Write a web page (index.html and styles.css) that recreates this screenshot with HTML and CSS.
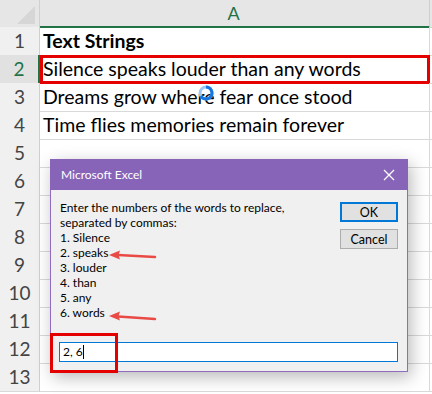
FILE: index.html
```html
<!DOCTYPE html>
<html lang="en">
<head>
  <meta charset="UTF-8" />
  <title>Replace words - Excel</title>
  <link rel="stylesheet" href="styles.css">
</head>
<body>

  <div class="sheet">
    <div class="row head">
      <div class="corner"><span class="tri"></span></div>
      <div class="colhead">A</div>
      <div class="rest"></div>
    </div>
    <div class="row">
      <div class="num">1</div>
      <div class="cell bold">Text Strings</div>
      <div class="rest"></div>
    </div>
    <div class="row">
      <div class="num sel">2</div>
      <div class="cell marked">Silence speaks louder than any words</div>
      <div class="rest"></div>
    </div>
    <div class="row">
      <div class="num">3</div>
      <div class="cell">Dreams grow where fear once stood</div>
      <div class="rest"></div>
    </div>
    <div class="row">
      <div class="num">4</div>
      <div class="cell">Time flies memories remain forever</div>
      <div class="rest"></div>
    </div>
    <div class="row"><div class="num">5</div><div class="cell"></div><div class="rest"></div></div>
    <div class="row"><div class="num">6</div><div class="cell"></div><div class="rest"></div></div>
    <div class="row"><div class="num">7</div><div class="cell"></div><div class="rest"></div></div>
    <div class="row"><div class="num">8</div><div class="cell"></div><div class="rest"></div></div>
    <div class="row"><div class="num">9</div><div class="cell"></div><div class="rest"></div></div>
    <div class="row"><div class="num">10</div><div class="cell"></div><div class="rest"></div></div>
    <div class="row"><div class="num">11</div><div class="cell"></div><div class="rest"></div></div>
    <div class="row"><div class="num">12</div><div class="cell"></div><div class="rest"></div></div>
    <div class="row"><div class="num">13</div><div class="cell"></div><div class="rest"></div></div>
  </div>

  <!-- busy cursor -->
  <svg class="busy" width="18" height="18" viewBox="0 0 18 18">
    <circle cx="9" cy="9" r="6" fill="none" stroke="#9cc8f2" stroke-width="3"/>
    <path d="M9 3 A6 6 0 1 1 3.8 12" fill="none" stroke="#1677e0" stroke-width="3"/>
  </svg>

  <div class="dialog">
    <div class="titlebar">
      <span>Microsoft Excel</span>
      <svg class="close" width="12" height="12" viewBox="0 0 12 12">
        <path d="M1 1 L11 11 M11 1 L1 11" stroke="#fff" stroke-width="1.3"/>
      </svg>
    </div>
    <div class="dbody">
      <div class="top">
        <div class="msg">
          Enter the numbers of the words to replace,<br>
          separated by commas:<br>
          1. Silence<br>
          2. speaks<br>
          3. louder<br>
          4. than<br>
          5. any<br>
          6. words
        </div>
        <div class="buttons">
          <button class="btn ok">OK</button>
          <button class="btn">Cancel</button>
        </div>
      </div>
      <div class="entry">2, 6<span class="caret"></span></div>
    </div>
  </div>

  <!-- annotations -->
  <div class="mark-input"></div>
  <svg class="arrows" width="432" height="394" viewBox="0 0 432 394">
    <path d="M155 257 L118 255" stroke="#ea4a45" stroke-width="2.5" stroke-linecap="round"/>
    <path d="M109 255 L120 250.5 L118.5 255 L120 259.5 Z" fill="#ea4a45"/>
    <path d="M155 319 L118 316.5" stroke="#ea4a45" stroke-width="2.5" stroke-linecap="round"/>
    <path d="M109 316 L120 311.5 L118.5 316 L120 320.5 Z" fill="#ea4a45"/>
  </svg>

</body>
</html>
```

FILE: styles.css
```css
body {
  margin: 0;
  width: 432px;
  height: 394px;
  overflow: hidden;
  position: relative;
  background: #fff;
  font-family: Lato, "Open Sans", sans-serif;
}
.sheet {
  display: flex;
  flex-direction: column;
}
.row {
  display: grid;
  grid-template-columns: 40px 390px 1fr;
  height: 28px;
}
.row.head {
  height: 27px;
  background: #e6e6e6;
}
.corner {
  border-right: 1px solid #d0d0d0;
  position: relative;
}
.tri {
  position: absolute;
  right: 4px;
  bottom: 4px;
  width: 0;
  height: 0;
  border-left: 18px solid transparent;
  border-bottom: 18px solid #d6d6d6;
}
.colhead {
  border-right: 1px solid #cfcfcf;
  border-bottom: 2px solid #217346;
  color: #217346;
  font-size: 18px;
  text-align: center;
  line-height: 26px;
  padding-right: 2px;
}
.head .rest {
  border-bottom: 1px solid #cfcfcf;
}
.num {
  background: #f0f0f0;
  border-right: 1px solid #cfcfcf;
  border-bottom: 1px solid #d9d9d9;
  color: #444;
  font-size: 19px;
  text-align: center;
  line-height: 28px;
  box-sizing: border-box;
}
.num.sel {
  background: #e1e1e1;
  color: #217346;
  border-right: 2px solid #217346;
}
.cell {
  border-right: 1px solid #d9d9d9;
  border-bottom: 1px solid #d9d9d9;
  font-size: 19.5px;
  color: #000;
  line-height: 28px;
  padding-left: 3px;
  white-space: nowrap;
  box-sizing: border-box;
}
.cell.bold {
  font-weight: bold;
}
.cell.marked {
  outline: 3px solid #e50000;
  outline-offset: -3px;
}
.rest {
  border-bottom: 1px solid #d9d9d9;
}

.busy {
  position: absolute;
  left: 197px;
  top: 84px;
}

.dialog {
  position: absolute;
  left: 50px;
  top: 159px;
  width: 358px;
  height: 213px;
  box-sizing: border-box;
  border: 1px solid #8f6cc0;
  border-top: none;
  background: #f0f0f0;
  box-shadow: 3px 5px 16px rgba(0,0,0,0.28);
  font-family: Lato, "Noto Sans", sans-serif;
  font-size: 12px;
  color: #000;
  display: flex;
  flex-direction: column;
}
.titlebar {
  height: 31px;
  margin: 0 -1px;
  background: #8764b8;
  color: #fff;
  display: flex;
  align-items: center;
  justify-content: space-between;
  padding: 0 10px 0 11px;
}
.close {
  margin-right: 3px;
}
.dbody {
  flex: 1;
  display: flex;
  flex-direction: column;
  justify-content: space-between;
  padding: 10px 9px 9px 9px;
}
.top {
  display: flex;
  justify-content: space-between;
}
.msg {
  line-height: 15px;
}
.buttons {
  display: flex;
  flex-direction: column;
  gap: 7px;
  padding-top: 2px;
}
.btn {
  width: 58px;
  height: 20px;
  font-family: Lato, "Noto Sans", sans-serif;
  font-size: 12.5px;
  background: #e1e1e1;
  border: 1px solid #adadad;
  padding: 0;
  color: #000;
}
.btn.ok {
  border: 2px solid #0078d7;
}
.entry {
  height: 20px;
  box-sizing: border-box;
  background: #fff;
  border: 1px solid #0078d7;
  padding-left: 3px;
  line-height: 18px;
  margin-left: -1px;
}
.caret {
  display: inline-block;
  width: 1px;
  height: 14px;
  background: #000;
  vertical-align: -3px;
}

.mark-input {
  position: absolute;
  left: 50px;
  top: 333px;
  width: 68px;
  height: 40px;
  box-sizing: border-box;
  border: 3px solid #e50000;
}
.arrows {
  position: absolute;
  left: 0;
  top: 0;
}
```
